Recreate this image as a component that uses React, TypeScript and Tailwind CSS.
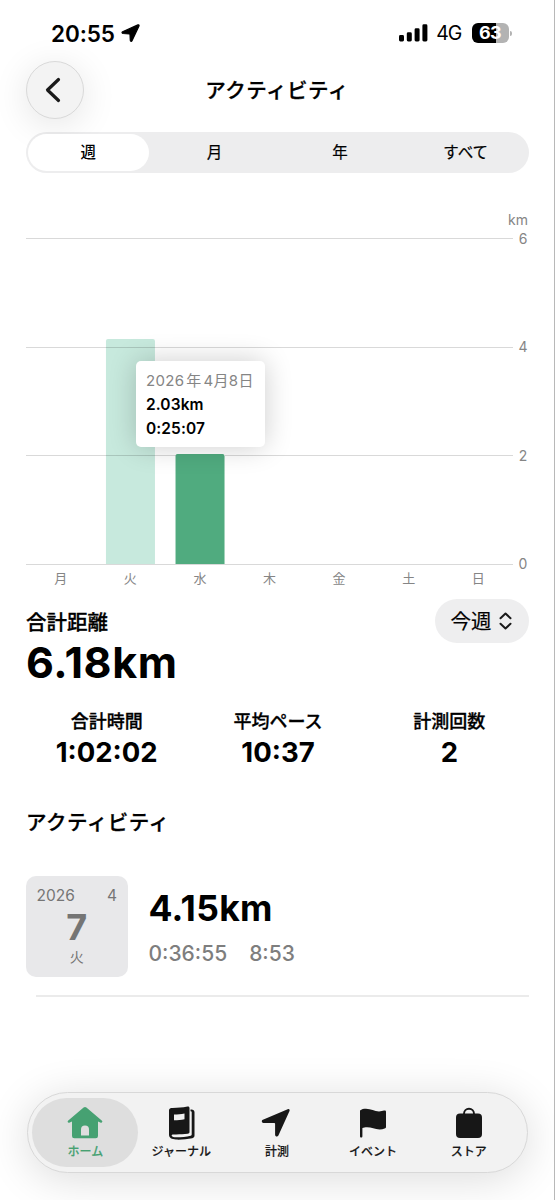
import React from 'react';

interface DayData {
  label: string;
  km: number;
  selected?: boolean;
}

const week: DayData[] = [
  { label: '月', km: 0 },
  { label: '火', km: 4.15 },
  { label: '水', km: 2.03, selected: true },
  { label: '木', km: 0 },
  { label: '金', km: 0 },
  { label: '土', km: 0 },
  { label: '日', km: 0 },
];

const stats = [
  { label: '合計時間', value: '1:02:02' },
  { label: '平均ペース', value: '10:37' },
  { label: '計測回数', value: '2' },
];

const StatusBar = () => (
  <div className="flex h-[60px] items-center pt-[7px] pl-[51px] pr-[42px]">
    <span className="pt-[1px] text-[22.5px] leading-none font-semibold tracking-[-0.1px]">20:55</span>
    <svg className="mb-[2px] ml-[6px]" width="19" height="18" viewBox="0 0 19 18">
      <path d="M16.900 .9 1.600 7.800c-.9.400-.7 1.600.3 1.700l6.600.4c.3 0 .5.200.5.500l.3 6c.1 1 1.300 1.200 1.700.3L18 1.900c.3-.7-.400-1.300-1.100-1z" fill="#000" stroke="#000" strokeWidth="1.200" strokeLinejoin="round" />
    </svg>
    <svg className="mb-[1px] ml-auto" width="29" height="18" viewBox="0 0 29 18">
      <rect x="0" y="11" width="5" height="6.500" rx="1.400" />
      <rect x="7.800" y="8.300" width="5" height="9.200" rx="1.400" />
      <rect x="15.600" y="4.300" width="5" height="13.200" rx="1.400" />
      <rect x="23.400" y="0.300" width="5" height="17.200" rx="1.400" />
    </svg>
    <span className="ml-[8px] text-[19.5px] leading-none tracking-[-0.9px]">4G</span>
    <div className="mb-[1px] ml-[10px] flex h-[20px] w-[37px] items-center justify-center rounded-[6px] bg-[linear-gradient(90deg,#000_64%,#b3b3b3_64%)] text-[18px] leading-none font-bold tracking-[-0.6px] text-white">
      63
    </div>
    <div className="ml-[1.5px] h-[5px] w-[2px] rounded-r-full bg-[#b3b3b3]" />
  </div>
);

const Header = () => (
  <header className="grid h-[59px] grid-cols-[58px_1fr_58px] items-center px-[26px]">
    <button className="flex h-[58px] w-[58px] items-center justify-center rounded-full border border-[#d9d9d9] bg-[#f3f3f3] shadow-[0_6px_36px_rgba(0,0,0,0.11)]">
      <svg width="16" height="26" viewBox="0 0 16 26" className="mr-[4px]" fill="none" stroke="#1a1a1a" strokeWidth="3.200" strokeLinecap="round" strokeLinejoin="round">
        <path d="M13.500 2.500 2.500 13l11 10.500" />
      </svg>
    </button>
    <h1 className="pt-[3px] text-center text-[20.5px] leading-none font-medium tracking-[0.5px] [-webkit-text-stroke:0.3px]">アクティビティ</h1>
  </header>
);

const PeriodTabs = () => (
  <div className="mr-[25.500px] ml-[26px] mt-[12.5px] grid h-[41px] grid-cols-4 items-center rounded-full bg-[#ededee] text-center text-[15.5px] leading-none">
    <div className="ml-[2px] mr-[3px] flex h-[37px] items-center justify-center rounded-full bg-white pt-[2px] font-medium">週</div>
    <span className="pt-[2px] [-webkit-text-stroke:0.2px]">月</span>
    <span className="pt-[2px] [-webkit-text-stroke:0.2px]">年</span>
    <span className="pt-[2px] [-webkit-text-stroke:0.2px]">すべて</span>
  </div>
);

const Chart = () => {
  const left = 26;
  const base = 392;
  const unit = 54.2;
  const step = 487 / 7;
  return (
    <div className="relative mt-[-0.5px]">
      <svg className="block" width="554" height="418" viewBox="0 0 554 418">
        {week.map((d, i) =>
          d.km > 0 ? (
            <path
              key={d.label}
              d={`M${left + step * (i + 0.5) - 24.4} ${base}v${-(d.km * unit - 2)}q0 -2 2 -2h45q2 0 2 2v${d.km * unit - 2}z`}
              fill={d.selected ? '#50ab7f' : '#c7e9dd'}
            />
          ) : null
        )}
        {[0, 2, 4, 6].map((v) => (
          <g key={v}>
            {v === 2 ? (
              <path d="M26 283.500H176M225 283.500H513" stroke="#000" strokeOpacity=".15" />
            ) : (
              <path d={`M26 ${Math.floor(base - v * unit) + 0.5}H513`} stroke="#000" strokeOpacity=".15" />
            )}
            <text x="523" y={base - v * unit + 5.2} textAnchor="middle" fontSize="14" fill="#858585">{v}</text>
          </g>
        ))}
        <text x="528" y="52.500" textAnchor="end" fontSize="14" fill="#858585">km</text>
        {week.map((d, i) => (
          <text key={d.label} x={left + step * (i + 0.5)} y="410.500" textAnchor="middle" fontSize="13" fill="#858585">{d.label}</text>
        ))}
      </svg>
      <div className="absolute top-[189px] left-[136px] h-[86px] w-[128.500px] rounded-[5px] bg-white pt-[9px] pl-[10px] whitespace-nowrap shadow-[0_0_28px_rgba(0,0,0,0.2)]">
        <p className="text-[15px] leading-[22px] tracking-[0.3px] text-[#858585]">
          2026<span className="ml-[2px]">年</span><span className="ml-[2px]">4月8日</span>
        </p>
        <p className="pt-[1px] text-[15.500px] leading-[24px] font-semibold tracking-[0.1px]">2.03km</p>
        <p className="text-[15.500px] leading-[24px] font-semibold tracking-[0.1px]">0:25:07</p>
      </div>
    </div>
  );
};

const Summary = () => (
  <section>
    <div className="mt-[9px] flex items-start justify-between pr-[25px] pl-[26px]">
      <div>
        <p className="mt-[13px] text-[20.5px] leading-[22px] font-medium [-webkit-text-stroke:0.3px]">合計距離</p>
        <p className="text-[43px] leading-[56px] font-bold tracking-[0.65px]">6.18km</p>
      </div>
      <button className="flex h-[44px] w-[94px] items-center justify-center gap-[7px] rounded-full bg-[#eeeeef] pr-[2px] text-[20.500px] leading-none">
        <span className="pt-[3px] [-webkit-text-stroke:0.2px]">今週</span>
        <svg width="13" height="18" viewBox="0 0 13 18" fill="none" stroke="#1a1a1a" strokeWidth="2" strokeLinecap="round" strokeLinejoin="round">
          <path d="M1.500 6.200 6.500 1.500l5 4.700M1.500 11.800l5 4.700 5-4.700" />
        </svg>
      </button>
    </div>
    <div className="mr-[19px] ml-[21px] mt-[22px] grid grid-cols-3 text-center">
      {stats.map((s) => (
        <div key={s.label}>
          <p className="text-[18px] leading-[20px] font-medium [-webkit-text-stroke:0.3px]">{s.label}</p>
          <p className="text-[27.5px] leading-[41px] font-bold">{s.value}</p>
        </div>
      ))}
    </div>
  </section>
);

const ActivityList = () => (
  <section className="mt-[40px] pr-[25px] pl-[26px]">
    <h2 className="text-[20.5px] leading-[20px] font-medium tracking-[0.5px] [-webkit-text-stroke:0.3px]">アクティビティ</h2>
    <div className="mt-[43px] flex h-[101px]">
      <div className="flex w-[102px] flex-col rounded-[10px] bg-[#e8e8ea] pr-[11px] pl-[10.5px] pt-[9px] text-[#757575]">
        <div className="flex justify-between text-[15.5px] leading-[22px]">
          <span>2026</span>
          <span>4</span>
        </div>
        <p className="text-center text-[36px] leading-[40px] font-bold">7</p>
        <p className="text-center text-[14px] leading-[20px]">火</p>
      </div>
      <div className="ml-[20.5px] pt-[11px]">
        <p className="text-[35.5px] leading-[44px] font-bold tracking-[0.3px]">4.15km</p>
        <p className="flex gap-[22px] pt-[1px] text-[21px] leading-[44px] font-medium text-[#7e7e7e]">
          <span>0:36:55</span>
          <span>8:53</span>
        </p>
      </div>
    </div>
    <div className="mt-[18px] ml-[10px] h-[2px] bg-[#ebebeb]" />
  </section>
);

const HomeIcon = () => (
  <svg width="36" height="34" viewBox="0 0 36 34" fill="#46a172">
    <path d="M16.600 1.600a2 2 0 0 1 2.800 0L35 14.800c.9.900 0 2.300-1.200 1.900L31 15.400V30a2.300 2.300 0 0 1-2.300 2.300H7.300A2.300 2.300 0 0 1 5 30V15.400l-2.800 1.300c-1.200.4-2.100-1-1.200-1.900z" />
    <path d="M14 29.500v-6a4 4 0 0 1 8 0v6z" fill="#dedede" />
  </svg>
);

const JournalIcon = () => (
  <svg width="27" height="34" viewBox="0 0 27 34">
    <path d="M1 4.200C1 2.300 2.500 1.900 4.500 1.900c6 0 9.500-.4 15-1.400 1.200-.2 2 .4 2 1.500V26c0 1-.7 1.700-1.800 1.800-4.500.5-8.700.7-14 .6C3.800 28.400 3.500 29 3.700 29.700c.5 1.300 2.300 1.600 4.300 1.600 6 0 10-.5 14.700-1.500.7-.2 1-.6 1-1.300V6.300c0-.6-.5-1-1.200-1V3.600h1c1.700 0 3 .9 3 2.700v23.300c0 1.500-.8 2.300-2.200 2.600-5.300 1-10.500 1.600-16.300 1.400C3.700 33.400 1 31.900 1 28.600z" fill="#171717" />
    <path d="M6 8.500c4 0 7-.4 10.500-1v5.800c-3.500.7-6.500 1-10.500 1z" fill="#f2f2f2" />
  </svg>
);

const MeasureIcon = () => (
  <svg className="mr-[3px]" width="30" height="30" viewBox="0 0 30 30">
    <path d="M26.700 1.200 1.900 11.800c-1.700.8-1.300 3.100.5 3.200H13.300c.5 0 .8.300.8.800v10.900c0 2 2.500 2.400 3.300.7L28.500 3c.6-1.300-.6-2.400-1.800-1.800z" fill="#171717" />
  </svg>
);

const FlagIcon = () => (
  <svg width="28" height="30" viewBox="0 0 28 30">
    <path d="M1 2.500C2.500 1.200 4.800.8 7 .8c5 0 8.500 2.600 13 2.600 2 0 3.800-.4 5-.8 1.200-.4 2 .1 2 1.200v15c0 1-.5 1.500-1.400 1.800-1.400.6-3 .9-5 .9-4.500 0-8.400-2.200-12.600-2.200-2 0-3.300.4-4.600.8v8c0 1-.4 1.500-1.200 1.500S1 29 1 28z" fill="#171717" />
  </svg>
);

const StoreIcon = () => (
  <svg width="28" height="32" viewBox="0 0 28 32">
    <path d="M9 7.500V6.800a5 5 0 0 1 10 0v.7" fill="none" stroke="#171717" strokeWidth="1.900" />
    <rect x="1" y="6.500" width="26" height="24.500" rx="4" fill="#171717" />
  </svg>
);

const tabs = [
  { label: 'ホーム', icon: <HomeIcon />, active: true },
  { label: 'ジャーナル', icon: <JournalIcon /> },
  { label: '計測', icon: <MeasureIcon /> },
  { label: 'イベント', icon: <FlagIcon /> },
  { label: 'ストア', icon: <StoreIcon /> },
];

const TabBar = () => (
  <nav className="absolute top-[1092px] left-[27px] flex h-[81px] w-[501px] items-center rounded-full border border-[#d8d8d8] bg-[#f2f2f2] pl-[4.400px] shadow-[0_6px_44px_rgba(0,0,0,0.14)]">
    {tabs.map((t) => (
      <div
        key={t.label}
        className={`flex h-[69px] shrink-0 flex-col items-center rounded-full ${t.active ? 'mr-[-5px] w-[106px] bg-[#dedede] text-[#46a172]' : 'w-[95.800px] text-[#171717]'}`}
      >
        <div className="mt-[7px] flex h-[36px] items-center">{t.icon}</div>
        <span className="mt-[4px] text-[12px] leading-[14px] font-medium whitespace-nowrap [-webkit-text-stroke:0.15px]">{t.label}</span>
      </div>
    ))}
  </nav>
);

const App: React.FC = () => {
  return (
    <div className="relative h-[1200px] w-[555px] overflow-hidden border-r border-[#b8b8b8] bg-white font-['Inter','Noto_Sans_CJK_JP',sans-serif] text-black" lang="ja">
      <StatusBar />
      <Header />
      <PeriodTabs />
      <Chart />
      <Summary />
      <ActivityList />
      <TabBar />
    </div>
  );
};

export default App;
